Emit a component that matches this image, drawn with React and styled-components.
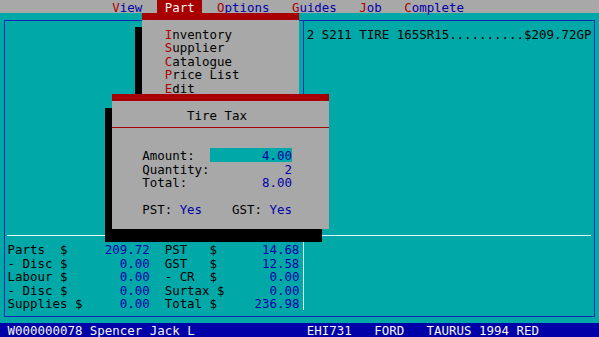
import React from "react";
import styled, { createGlobalStyle } from "styled-components";

const CW = 599 / 80;
const RH = 337 / 25;

const C = {
  gray: "#a8a8a8",
  teal: "#00a8a8",
  red: "#a80000",
  blue: "#0000a8",
  frame: "#1028b8",
  ink: "#000000",
  light: "#e4fafa",
  white: "#f4f4f4",
};

const Global = createGlobalStyle`
  html, body { margin: 0; padding: 0; background: #000; }
  body { font-family: "DejaVu Sans Mono", "Liberation Mono", monospace; }
`;

const Screen = styled.div`
  width: 599px;
  height: 337px;
  overflow: hidden;
  display: grid;
  grid-template-columns: repeat(80, ${CW}px);
  grid-template-rows: repeat(25, ${RH}px);
  background: ${C.teal};
  font-family: "DejaVu Sans Mono", "Liberation Mono", monospace;
  font-size: 12.44px;
  line-height: ${RH + 2}px;
  color: ${C.ink};
`;

/* ---------- menu bar ---------- */
const MenuBar = styled.nav`
  grid-row: 1;
  grid-column: 1 / -1;
  display: grid;
  grid-template-columns: subgrid;
  background: ${C.gray};
`;

const MenuItem = styled.span`
  grid-column: ${(p) => p.$c + 1} / span ${(p) => p.$w};
  padding-left: ${CW}px;
  white-space: pre;
  color: ${(p) => (p.$active ? C.white : C.blue)};
  background: ${(p) => (p.$active ? C.red : "transparent")};
`;

const Hot = styled.span`
  color: ${(p) => (p.$active ? C.white : C.red)};
`;

/* ---------- frame & lines ---------- */
const Frame = styled.div`
  grid-row: 2 / 25;
  grid-column: 1 / -1;
  margin: ${RH / 2}px ${CW / 2}px;
  border: 1px solid ${C.frame};
`;

const VRule = styled.div`
  grid-row: ${(p) => p.$r + 1} / span ${(p) => p.$h};
  grid-column: ${(p) => p.$c + 1};
  justify-self: center;
  width: 1px;
  margin-top: ${(p) => (p.$half ? RH / 2 : 0)}px;
  background: ${(p) => p.$color};
`;

const HRule = styled.div`
  grid-row: ${(p) => p.$r + 1};
  grid-column: ${(p) => p.$c + 1} / span ${(p) => p.$w};
  align-self: center;
  height: 1px;
  background: ${(p) => p.$color};
`;

const ItemLine = styled.div`
  grid-row: ${(p) => p.$r + 1};
  grid-column: ${(p) => p.$c + 1} / span 38;
  white-space: pre;
`;

/* ---------- summary ---------- */
const Summary = styled.section`
  grid-row: 19 / 24;
  grid-column: 2 / 41;
  display: grid;
  grid-template-columns: subgrid;
  grid-template-rows: subgrid;
`;

const SumLabel = styled.span`
  grid-row: ${(p) => p.$r};
  grid-column: ${(p) => p.$c} / span 9;
  white-space: pre;
`;

const SumValue = styled.span`
  grid-row: ${(p) => p.$r};
  grid-column: ${(p) => p.$from} / ${(p) => p.$to};
  text-align: right;
  color: ${C.blue};
  white-space: pre;
`;

/* ---------- shadows ---------- */
const Shadow = styled.div`
  grid-row: ${(p) => p.$r + 1} / span ${(p) => p.$h};
  grid-column: ${(p) => p.$c + 1} / span ${(p) => p.$w};
  background: #000;
  z-index: ${(p) => p.$z};
`;

/* ---------- dropdown ---------- */
const Dropdown = styled.ul`
  grid-row: 2 / 9;
  grid-column: 20 / 41;
  display: grid;
  grid-template-columns: subgrid;
  grid-template-rows: subgrid;
  margin: 0;
  padding: 0;
  list-style: none;
  background: linear-gradient(${C.red} 0 ${RH / 2}px, ${C.gray} ${RH / 2}px);
  z-index: 2;
`;

const DropItem = styled.li`
  grid-row: ${(p) => p.$i + 2};
  grid-column: 4 / -1;
  white-space: pre;
`;

/* ---------- dialog ---------- */
const Dialog = styled.div`
  grid-row: 8 / 18;
  grid-column: 16 / 45;
  display: grid;
  grid-template-columns: subgrid;
  grid-template-rows: subgrid;
  background: linear-gradient(${C.red} 0 ${RH / 2}px, ${C.gray} ${RH / 2}px);
  z-index: 4;
`;

const DialogTitle = styled.h1`
  grid-row: 2;
  grid-column: 11 / span 10;
  margin: 0;
  font: inherit;
  white-space: pre;
`;

const DialogRule = styled.hr`
  grid-row: 3;
  grid-column: 1 / -1;
  align-self: center;
  width: 100%;
  height: 1px;
  margin: 0;
  border: 0;
  background: ${C.red};
`;

const FieldLabel = styled.span`
  grid-row: ${(p) => p.$r};
  grid-column: ${(p) => p.$c} / span ${(p) => p.$w || 9};
  white-space: pre;
`;

const FieldValue = styled.span`
  grid-row: ${(p) => p.$r};
  grid-column: ${(p) => p.$c} / span ${(p) => p.$w};
  text-align: ${(p) => p.$align || "right"};
  color: ${C.blue};
  background: ${(p) => (p.$input ? C.teal : "transparent")};
  white-space: pre;
`;

/* ---------- status bar ---------- */
const StatusBar = styled.footer`
  grid-row: 25;
  grid-column: 1 / -1;
  display: grid;
  grid-template-columns: subgrid;
  background: ${C.blue};
  color: ${C.white};
`;

const StatusField = styled.span`
  grid-column: ${(p) => p.$c + 1} / span ${(p) => p.$w};
  white-space: pre;
`;

const menus = [
  { name: "View", c: 14, w: 6 },
  { name: "Part", c: 21, w: 6, active: true },
  { name: "Options", c: 28, w: 9 },
  { name: "Guides", c: 38, w: 8 },
  { name: "Job", c: 47, w: 5 },
  { name: "Complete", c: 53, w: 10 },
];

const partItems = ["Inventory", "Supplier", "Catalogue", "Price List", "Edit"];

const summary = [
  ["Parts  $", "209.72", "PST   $", "14.68"],
  ["- Disc $", "0.00", "GST   $", "12.58"],
  ["Labour $", "0.00", "- CR  $", "0.00"],
  ["- Disc $", "0.00", "Surtax $", "0.00"],
  ["Supplies $", "0.00", "Total $", "236.98"],
];

export default function App() {
  return (
    <>
      <Global />
      <Screen>
        <MenuBar>
          {menus.map((m) => (
            <MenuItem key={m.name} $c={m.c} $w={m.w} $active={m.active}>
              <Hot $active={m.active}>{m.name[0]}</Hot>
              {m.name.slice(1)}
            </MenuItem>
          ))}
        </MenuBar>

        <Frame />
        <VRule $r={1} $h={16} $c={40} $half $color={C.frame} />
        <HRule $r={17} $c={1} $w={78} $color={C.light} />
        <VRule $r={18} $h={5} $c={40} $color={C.light} />

        <ItemLine $r={2} $c={41}>
          2 S211 TIRE 165SR15..........$209.72GP
        </ItemLine>

        <Summary>
          {summary.map((row, i) => (
            <React.Fragment key={i}>
              <SumLabel $r={i + 1} $c={1}>{row[0]}</SumLabel>
              <SumValue $r={i + 1} $from={12} $to={20}>{row[1]}</SumValue>
              <SumLabel $r={i + 1} $c={22}>{row[2]}</SumLabel>
              <SumValue $r={i + 1} $from={30} $to={40}>{row[3]}</SumValue>
            </React.Fragment>
          ))}
        </Summary>

        <Shadow $r={2} $h={6} $c={18} $w={1} $z={2} />
        <Dropdown>
          {partItems.map((it, i) => (
            <DropItem key={it} $i={i}>
              <Hot>{it[0]}</Hot>
              {it.slice(1)}
            </DropItem>
          ))}
        </Dropdown>

        <Shadow $r={8} $h={9} $c={14} $w={1} $z={3} />
        <Shadow $r={17} $h={1} $c={14} $w={29} $z={3} />
        <Dialog>
          <DialogTitle>Tire Tax</DialogTitle>
          <DialogRule />
          <FieldLabel $r={5} $c={5}>Amount:</FieldLabel>
          <FieldValue $r={5} $c={14} $w={11} $input>4.00</FieldValue>
          <FieldLabel $r={6} $c={5}>Quantity:</FieldLabel>
          <FieldValue $r={6} $c={14} $w={11}>2</FieldValue>
          <FieldLabel $r={7} $c={5}>Total:</FieldLabel>
          <FieldValue $r={7} $c={14} $w={11}>8.00</FieldValue>
          <FieldLabel $r={9} $c={5} $w={4}>PST:</FieldLabel>
          <FieldValue $r={9} $c={10} $w={3} $align="left">Yes</FieldValue>
          <FieldLabel $r={9} $c={17} $w={4}>GST:</FieldLabel>
          <FieldValue $r={9} $c={22} $w={3} $align="left">Yes</FieldValue>
        </Dialog>

        <StatusBar>
          <StatusField $c={1} $w={30}>W000000078 Spencer Jack L</StatusField>
          <StatusField $c={41} $w={8}>EHI731</StatusField>
          <StatusField $c={50} $w={6}>FORD</StatusField>
          <StatusField $c={57} $w={20}>TAURUS 1994 RED</StatusField>
        </StatusBar>
      </Screen>
    </>
  );
}
